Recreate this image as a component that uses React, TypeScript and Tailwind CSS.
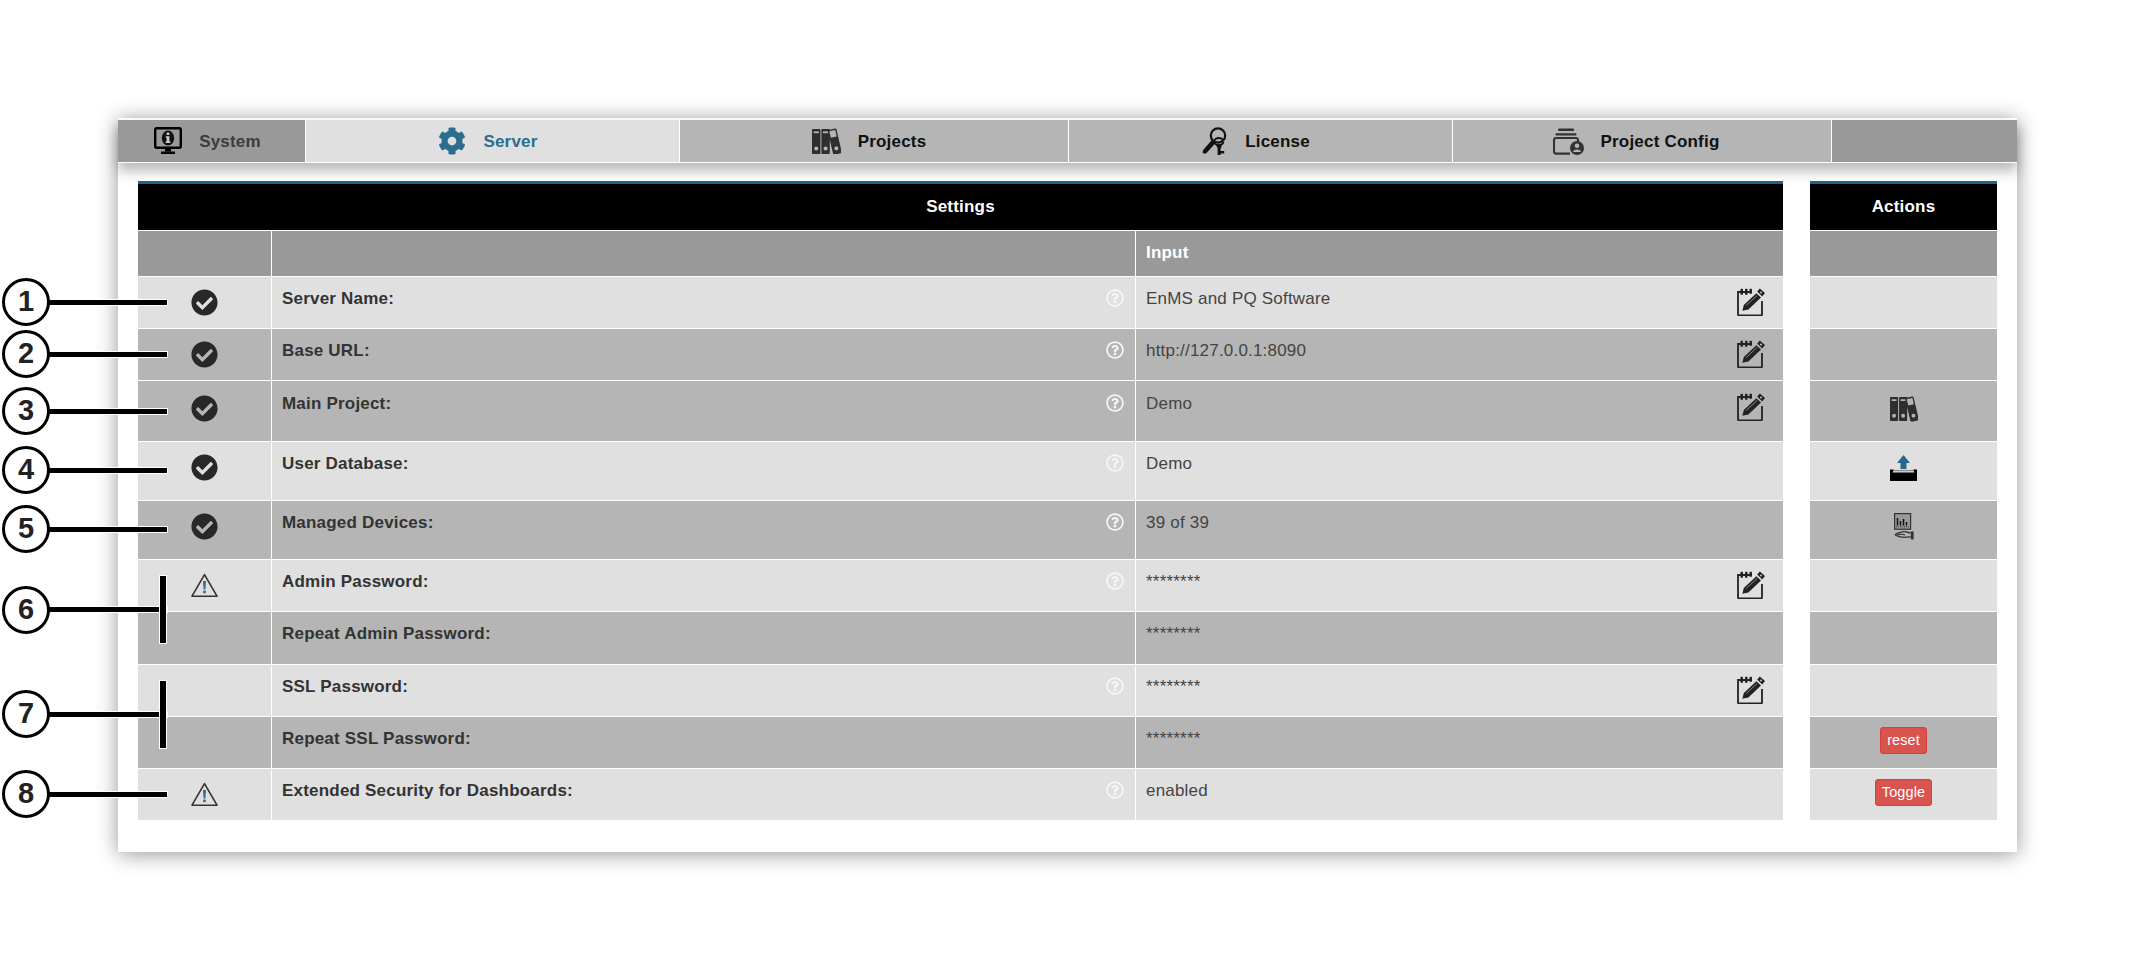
import React from "react";
import { FaCheckCircle, FaCog, FaRegQuestionCircle } from "react-icons/fa";

const font = "font-['Liberation_Sans',Arial,sans-serif]";
const textCls = "text-[17px] tracking-[0.2px]";

function MonitorIcon() {
  return (
    <svg width="28" height="28" viewBox="0 0 28 28">
      <rect x="1.2" y="1.2" width="25.6" height="19.6" rx="1.5" fill="none" stroke="#000" strokeWidth="2.4" />
      <ellipse cx="14" cy="11" rx="6.2" ry="7.4" fill="#111" />
      <rect x="12.6" y="5.6" width="2.8" height="2.4" fill="#ccc" />
      <path d="M11.8 9.2h3.6v5.2h1v1.6h-4.8v-1.6h1v-3.6h-.8z" fill="#ccc" />
      <rect x="11" y="21" width="6" height="3.5" fill="#000" />
      <rect x="7" y="24.5" width="14" height="2.5" fill="#000" />
    </svg>
  );
}

function BindersIcon({ size = 29 }: { size?: number }) {
  const one = (x: number) => (
    <g>
      <rect x={x} y="1" width="8.4" height="25" rx="0.8" fill="#2e2e2e" />
      <rect x={x + 1.6} y="3.4" width="5.2" height="1.8" fill="#b5b5b5" />
      <circle cx={x + 4.2} cy="20.5" r="2" fill="#b5b5b5" />
    </g>
  );
  return (
    <svg width={size} height={size * 0.93} viewBox="0 0 29 27">
      {one(0)}
      {one(9.4)}
      <g transform="rotate(-13 23 14)">
        <rect x="19.2" y="1.6" width="7.4" height="24" rx="0.8" fill="#b5b5b5" stroke="#2e2e2e" strokeWidth="1.4" />
        <rect x="19" y="9" width="7.8" height="16.6" rx="0.8" fill="#2e2e2e" />
        <circle cx="22.9" cy="20.5" r="2" fill="#b5b5b5" />
      </g>
    </svg>
  );
}

function KeysIcon() {
  return (
    <svg width="26" height="28" viewBox="0 0 26 28" fill="none">
      <circle cx="16" cy="8.5" r="7.2" stroke="#111" strokeWidth="2.2" />
      <path d="M21 12.5c-2.5-2-7-2.2-8.5.6-1.2 2.4.8 5 4 5 2.5 0 4.6-1.4 5-3.4" stroke="#111" strokeWidth="1.8" />
      <path d="M10.5 12.2 L14 15.6 L5 25.4 L2.6 27 L0.4 25.2 L1.6 22.4 Z" fill="#111" />
      <path d="M14.4 17.5h5v3.2h-.8v3.2h3.6v2.6h-3.6v1.5h-3v-7.3a3 3 0 0 1-1.2-3.2z" fill="#111" />
    </svg>
  );
}

function ConfigIcon() {
  return (
    <svg width="31" height="27" viewBox="0 0 31 27" fill="none">
      <rect x="5" y="0.5" width="16" height="2.4" rx="1" fill="#333" />
      <rect x="2.5" y="5.2" width="21" height="2.4" rx="1" fill="#333" />
      <path d="M17 25.6H3a2 2 0 0 1-2-2V12a2 2 0 0 1 2-2h20a2 2 0 0 1 2 2v2" stroke="#333" strokeWidth="2.1" />
      <circle cx="24" cy="20" r="7" fill="#333" />
      <circle cx="24" cy="17.8" r="2.3" fill="#b5b5b5" />
      <path d="M19.8 24a4.4 3.4 0 0 1 8.4 0z" fill="#b5b5b5" />
    </svg>
  );
}

function EditIcon({ className }: { className?: string }) {
  return (
    <svg className={className} width="28" height="28" viewBox="0 0 28 28" fill="none">
      <path d="M13 4H1v22.6a.8.8 0 0 0 .8.8h22.4a.8.8 0 0 0 .8-.8V13" stroke="#222" strokeWidth="1.8" />
      <rect x="3.5" y="0.8" width="2.5" height="6" rx="0.6" fill="#222" />
      <rect x="8" y="0.8" width="2.5" height="6" rx="0.6" fill="#222" />
      <rect x="12.5" y="0.8" width="2.5" height="5" rx="0.6" fill="#222" />
      <path d="M19.4 5.2 L24 9.6 L11.4 21.4 L5.4 22.8 L6.8 17 Z" fill="#222" />
      <path d="M9.2 17.4 L20.2 7.4" stroke="#ffffff" strokeOpacity="0.45" strokeWidth="1" />
      <path d="M20.2 3.6 L22.8 0.6 L28 5 L25.2 8.4 Z" fill="#222" />
      <circle cx="24" cy="4.4" r="1" fill="#ffffff" fillOpacity="0.75" />
    </svg>
  );
}

function WarnIcon() {
  return (
    <svg width="27" height="25" viewBox="0 0 27 25" fill="none">
      <path d="M13.5 1.6 L26 23.2 H1 Z" stroke="#333" strokeWidth="1.6" strokeLinejoin="round" fill="none" />
      <path d="M12 8h3l-.6 8.5h-1.8z" fill="#2a6d8f" />
      <rect x="12.2" y="17.6" width="2.6" height="2.6" fill="#2a6d8f" />
    </svg>
  );
}

function UploadIcon() {
  return (
    <svg width="27" height="26" viewBox="0 0 27 26">
      <path d="M13.5 0 L20 8 H16.5 V14 H10.5 V8 H7 Z" fill="#24688c" />
      <path d="M0 14.5 L4 14.5 L2.6 17.5 L24.4 17.5 L23 14.5 L27 14.5 V26 H0 Z" fill="#000" />
      <rect x="4" y="15" width="19" height="1.2" fill="#888" />
    </svg>
  );
}

function DeviceHandIcon() {
  return (
    <svg width="20" height="27" viewBox="0 0 20 27" fill="none">
      <rect x="0.6" y="0.6" width="16" height="15.6" fill="#999" stroke="#333" strokeWidth="1.2" />
      <path d="M3.5 5v7.5M6.5 8v4.5M9.5 6v6.5M12.5 9v3.5" stroke="#111" strokeWidth="1.5" />
      <path d="M2 13.8h13" stroke="#222" strokeWidth="0.9" strokeDasharray="1 1" />
      <path d="M16.5 20c-2.5-.2-4-1.6-6.5-1.4-3 .2-5.5 1.2-8 2.4-1.2.8-.6 1.4.6 1.6 3 1.6 7.5 2.4 13.9 1" stroke="#333" strokeWidth="1.4" />
      <path d="M4 21.6c2.5-.6 4.5-.4 7 .3" stroke="#333" strokeWidth="1.1" />
      <rect x="16.8" y="18.4" width="2.8" height="8" fill="#333" />
    </svg>
  );
}

const tabs = [
  { label: "System", icon: <MonitorIcon />, cls: "w-[188px] pr-[8px] bg-[#999999] text-[#3c3c3c]" },
  { label: "Server", icon: <FaCog size={28} color="#2a6d8f" />, cls: "w-[374px] pr-[9px] bg-[#e0e0e0] text-[#2a6d8f]" },
  { label: "Projects", icon: <BindersIcon />, cls: "w-[389px] pr-[10px] bg-[#b5b5b5] text-[#111111]" },
  { label: "License", icon: <KeysIcon />, cls: "w-[384px] pr-[9px] bg-[#b5b5b5] text-[#111111]" },
  { label: "Project Config", icon: <ConfigIcon />, cls: "w-[379px] pr-[12px] bg-[#b5b5b5] text-[#111111]" },
];

type Row = {
  label: string;
  value: string;
  h: string;
  bg: string;
  status?: "ok" | "warn";
  help?: boolean;
  edit?: boolean;
  action?: React.ReactNode;
  actionPad: string;
  low?: boolean;
};

const Btn = ({ children }: { children: string }) => (
  <button className="h-[27px] px-[6px] rounded-[3px] bg-[#d9534f] border border-[#d43f3a] text-white text-[14.4px] tracking-[0.15px] leading-none">
    {children}
  </button>
);

const light = "bg-[#e0e0e0]";
const dark = "bg-[#b5b5b5]";

const rows: Row[] = [
  { label: "Server Name:", value: "EnMS and PQ Software", h: "h-[52px]", bg: light, status: "ok", help: true, edit: true, actionPad: "pt-[13px]" },
  { label: "Base URL:", value: "http://127.0.0.1:8090", h: "h-[52px]", bg: dark, status: "ok", help: true, edit: true, actionPad: "pt-[13px]" },
  { label: "Main Project:", value: "Demo", h: "h-[61px]", bg: dark, status: "ok", help: true, edit: true, action: <BindersIcon size={28} />, actionPad: "pt-[15px]", low: true },
  { label: "User Database:", value: "Demo", h: "h-[59px]", bg: light, status: "ok", help: true, action: <UploadIcon />, actionPad: "pt-[13px]" },
  { label: "Managed Devices:", value: "39 of 39", h: "h-[59px]", bg: dark, status: "ok", help: true, action: <DeviceHandIcon />, actionPad: "pt-[12px]" },
  { label: "Admin Password:", value: "********", h: "h-[52px]", bg: light, status: "warn", help: true, edit: true, actionPad: "pt-[13px]" },
  { label: "Repeat Admin Password:", value: "********", h: "h-[53px]", bg: dark, actionPad: "pt-[13px]" },
  { label: "SSL Password:", value: "********", h: "h-[52px]", bg: light, help: true, edit: true, actionPad: "pt-[13px]" },
  { label: "Repeat SSL Password:", value: "********", h: "h-[52px]", bg: dark, action: <Btn>reset</Btn>, actionPad: "pt-[10px]" },
  { label: "Extended Security for Dashboards:", value: "enabled", h: "h-[51px]", bg: light, status: "warn", help: true, action: <Btn>Toggle</Btn>, actionPad: "pt-[10px]" },
];

const lineCls = "absolute bg-black shadow-[0_0_0_1px_#ffffff]";

const callouts = [
  { n: "1", circle: "top-[278px]", line: "top-[300px]" },
  { n: "2", circle: "top-[330px]", line: "top-[352px]" },
  { n: "3", circle: "top-[387px]", line: "top-[409px]" },
  { n: "4", circle: "top-[446px]", line: "top-[468px]" },
  { n: "5", circle: "top-[505px]", line: "top-[527px]" },
  { n: "6", circle: "top-[586px]", line: "top-[607px]" },
  { n: "7", circle: "top-[690px]", line: "top-[712px]" },
  { n: "8", circle: "top-[770px]", line: "top-[792px]" },
];

export default function App() {
  return (
    <div className={`relative w-[2135px] h-[970px] overflow-hidden bg-white pt-[118px] pl-[118px] ${font}`}>
      <div className="w-[1899px] h-[734px] bg-white pt-[2px] shadow-[0_2px_20px_rgba(0,0,0,0.42)]">
        <div className="flex h-[43px] border-b border-white shadow-[0_8px_12px_rgba(0,0,0,0.28)]">
          {tabs.map((t) => (
            <div key={t.label} className={`flex items-center justify-center gap-[17px] border-r border-white font-bold ${textCls} ${t.cls}`}>
              {t.icon}
              <span className="pt-[1px]">{t.label}</span>
            </div>
          ))}
          <div className="flex-1 bg-[#999999]" />
        </div>

        <div className="flex gap-[27px] pl-[20px] pt-[18px]">
          <div className="w-[1645px]">
            <div className={`h-[50px] border-t-[3px] border-[#256185] bg-black border-b border-b-white flex items-center justify-center text-white font-bold ${textCls}`}>
              Settings
            </div>
            <div className={`flex h-[46px] bg-[#999999] border-b border-white text-white font-bold ${textCls}`}>
              <div className="w-[134px] border-r border-white" />
              <div className="w-[864px] border-r border-white" />
              <div className="flex-1 pl-[10px] pb-[2px] flex items-center">Input</div>
            </div>
            {rows.map((r, i) => (
              <div key={r.label} className={`flex ${r.h} ${r.bg} ${i < rows.length - 1 ? "border-b border-white" : ""}`}>
                <div className={`w-[134px] border-r border-white flex justify-center ${r.status === "warn" ? "pt-[13px]" : r.low ? "pt-[14px]" : "pt-[12px]"}`}>
                  {r.status === "ok" && <FaCheckCircle size={27} color="#282828" />}
                  {r.status === "warn" && <WarnIcon />}
                </div>
                <div className={`w-[864px] border-r border-white flex justify-between pl-[10px] pr-[11px] font-bold text-[#333333] leading-[20px] ${textCls} ${r.low ? "pt-[13px]" : "pt-[12px]"}`}>
                  <span>{r.label}</span>
                  {r.help && <FaRegQuestionCircle size={18} color="#f6f6f6" />}
                </div>
                <div className={`flex-1 flex justify-between pl-[10px] pr-[18px] text-[#444444] leading-[20px] ${textCls} ${r.low ? "pt-[13px]" : "pt-[12px]"}`}>
                  <span>{r.value}</span>
                  {r.edit && <EditIcon className="-mt-[1px]" />}
                </div>
              </div>
            ))}
          </div>

          <div className="w-[187px]">
            <div className={`h-[50px] border-t-[3px] border-[#256185] bg-black border-b border-b-white flex items-center justify-center text-white font-bold ${textCls}`}>
              Actions
            </div>
            <div className="h-[46px] bg-[#999999] border-b border-white" />
            {rows.map((r, i) => (
              <div key={r.label} className={`flex justify-center items-start ${r.h} ${r.bg} ${r.actionPad} ${i < rows.length - 1 ? "border-b border-white" : ""}`}>
                {r.action}
              </div>
            ))}
          </div>
        </div>
      </div>

      {callouts.map((c) => (
        <React.Fragment key={c.n}>
          <div className={`${lineCls} left-[48px] w-[119px] h-[5px] ${c.line}`} />
          <div className={`absolute left-[2px] w-[48px] h-[48px] rounded-full bg-white border-[3px] border-black flex items-center justify-center text-[#222222] font-bold text-[29px] ${c.circle}`}>
            {c.n}
          </div>
        </React.Fragment>
      ))}
      <div className={`${lineCls} left-[160px] w-[6px] top-[576px] h-[67px]`} />
      <div className={`${lineCls} left-[160px] w-[6px] top-[681px] h-[67px]`} />
    </div>
  );
}
